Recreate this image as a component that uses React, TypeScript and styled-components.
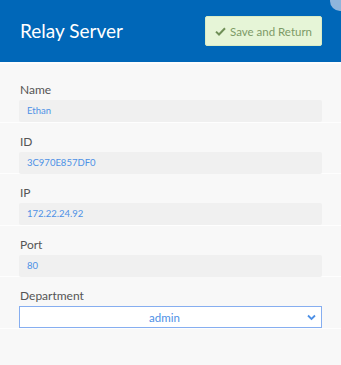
import React from "react";
import styled, { createGlobalStyle } from "styled-components";

const Global = createGlobalStyle`
  html, body { margin: 0; padding: 0; background: #f8f8f8; }
  body { font-family: Lato, "Open Sans", sans-serif; }
  * { box-sizing: border-box; }
`;

const Panel = styled.div`
  position: relative;
  width: 341px;
  height: 365px;
  background: #f8f8f8;
  overflow: hidden;
`;

const Header = styled.div`
  height: 62px;
  background: #0067b8;
  display: flex;
  align-items: center;
  justify-content: space-between;
  padding: 0 19px 0 20px;
  border-bottom: 2px solid #fdfdfd;
  box-sizing: content-box;
`;

const Title = styled.h1`
  margin: 0;
  color: #ffffff;
  font-size: 19px;
  font-weight: 400;
  line-height: 24px;
  padding-bottom: 1px;
`;

const SaveButton = styled.button`
  width: 117px;
  height: 30px;
  background: #e6f5d7;
  border: 1px solid #d9ecc6;
  border-radius: 2px;
  color: #7d9a66;
  font-family: Lato, sans-serif;
  font-size: 11.5px;
  display: flex;
  align-items: center;
  justify-content: center;
  gap: 4px;
  padding: 0;
`;

const Close = styled.div`
  position: absolute;
  top: -9px;
  right: -9px;
  width: 20px;
  height: 20px;
  border-radius: 50%;
  background: #8fb5dc;
`;

const Form = styled.div`
  padding-top: 7px;
`;

const Row = styled.div`
  height: 51.6px;
  padding: 10px 19px 0 19px;
  border-bottom: 1px solid #fefefe;
  display: flex;
  flex-direction: column;
`;

const Label = styled.label`
  font-size: 12px;
  color: #555555;
  line-height: 17px;
  margin-bottom: 2px;
  padding-left: 1px;
`;

const Field = styled.div`
  height: 22px;
  background: #f0f0f0;
  border-radius: 2px;
  color: #4d90e6;
  font-size: 9.5px;
  line-height: 22px;
  padding-left: 8px;
`;

const Select = styled.div`
  position: relative;
  height: 23px;
  background: #ffffff;
  border: 1px solid #86aef0;
  color: #4d90e6;
  font-size: 11.5px;
  display: flex;
  align-items: center;
  justify-content: center;
  padding-right: 12px;
`;

const Chevron = styled.svg`
  position: absolute;
  right: 5px;
  top: 7px;
`;

const fields = [
  { label: "Name", value: "Ethan" },
  { label: "ID", value: "3C970E857DF0" },
  { label: "IP", value: "172.22.24.92" },
  { label: "Port", value: "80" },
];

export default function App() {
  return (
    <>
      <Global />
      <Panel>
        <Header>
          <Title>Relay Server</Title>
          <SaveButton>
            <svg width="11" height="9" viewBox="0 0 11 9">
              <path d="M1 4.6 L4 7.5 L10 1.2" stroke="#6f8f57" strokeWidth="2" fill="none" />
            </svg>
            Save and Return
          </SaveButton>
        </Header>
        <Close />
        <Form>
          {fields.map((f) => (
            <Row key={f.label}>
              <Label>{f.label}</Label>
              <Field>{f.value}</Field>
            </Row>
          ))}
          <Row>
            <Label>Department</Label>
            <Select>
              admin
              <Chevron width="9" height="7" viewBox="0 0 9 7">
                <path d="M1 1.5 L4.5 5 L8 1.5" stroke="#4d90e6" strokeWidth="1.8" fill="none" />
              </Chevron>
            </Select>
          </Row>
        </Form>
      </Panel>
    </>
  );
}
